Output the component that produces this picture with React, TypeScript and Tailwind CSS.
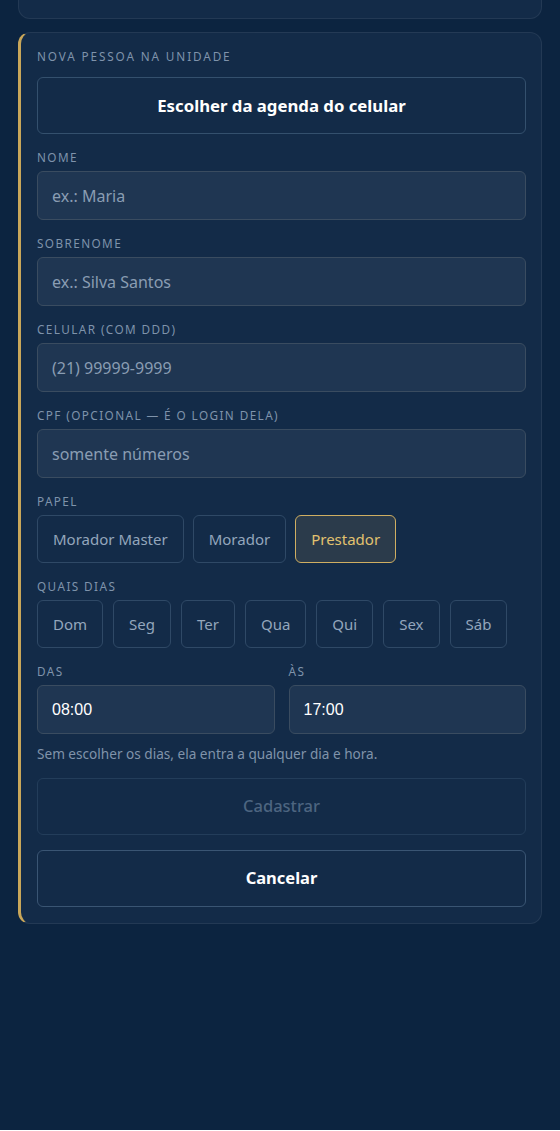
import React, { useState } from "react";

const font = { fontFamily: '"Noto Sans", "Open Sans", sans-serif' };

const DIAS = ["Dom", "Seg", "Ter", "Qua", "Qui", "Sex", "Sáb"];
const PAPEIS = ["Morador Master", "Morador", "Prestador"];

function Label({ children }: { children: React.ReactNode }) {
  return (
    <div className="text-[11.75px] leading-[14px] tracking-[0.12em] uppercase text-[#7f93ab] mb-[7px]">
      {children}
    </div>
  );
}

function Field({ label, placeholder }: { label: string; placeholder: string }) {
  return (
    <div>
      <Label>{label}</Label>
      <input
        placeholder={placeholder}
        className="w-full h-[49px] rounded-md bg-[#1f3652] border border-[#3a4c60] px-[14px] text-[16px] text-white placeholder:text-[#8a9db3] outline-none"
        style={font}
      />
    </div>
  );
}

export default function App() {
  const [papel, setPapel] = useState("Prestador");

  return (
    <main className="min-h-[1131px] bg-[#0c2440] px-[18px] pb-10" style={font}>
      {/* previous card, scrolled out */}
      <div className="h-[20px] -mt-[1px] rounded-b-xl bg-[#132b48] border border-t-0 border-white/[0.07]" />

      <div className="mt-[13px] rounded-xl bg-[#132b48] border border-white/[0.07] border-l-[3px] border-l-[#c9a75a] pl-[16px] pr-[15px] pt-[16px] pb-[16px]">
        <div className="text-[11.75px] leading-[14px] tracking-[0.16em] uppercase text-[#7f93ab]">
          Nova pessoa na unidade
        </div>

        <button className="mt-[14px] w-full h-[57px] rounded-md border border-[#34506d] text-white font-bold text-[16.75px]">
          Escolher da agenda do celular
        </button>

        <div className="mt-[16px] flex flex-col gap-[16px]">
          <Field label="Nome" placeholder="ex.: Maria" />
          <Field label="Sobrenome" placeholder="ex.: Silva Santos" />
          <Field label="Celular (com DDD)" placeholder="(21) 99999-9999" />
          <Field label="CPF (opcional — é o login dela)" placeholder="somente números" />

          <div>
            <Label>Papel</Label>
            <div className="flex gap-[9px]">
              {PAPEIS.map((p) => (
                <button
                  key={p}
                  onClick={() => setPapel(p)}
                  className={
                    papel === p
                      ? "h-[48px] px-[15px] rounded-md border border-[#cfae62] bg-[#2b3b4b] text-[#e2c26f] text-[15px]"
                      : "h-[48px] px-[15px] rounded-md border border-[#2f4966] text-[#93a6bc] text-[15px]"
                  }
                >
                  {p}
                </button>
              ))}
            </div>
          </div>

          <div>
            <Label>Quais dias</Label>
            <div className="flex gap-[10px]">
              {DIAS.map((d) => (
                <button
                  key={d}
                  className="h-[48px] px-[15px] rounded-md border border-[#2f4966] text-[#93a6bc] text-[15px]"
                >
                  {d}
                </button>
              ))}
            </div>
          </div>

          <div className="grid grid-cols-2 gap-[14px]">
            <div>
              <Label>Das</Label>
              <div
                className="h-[49px] rounded-md bg-[#1f3652] border border-[#3a4c60] px-[14px] flex items-center text-white text-[16px]"
                style={{ fontFamily: '"Liberation Sans", Arial, sans-serif' }}
              >
                08:00
              </div>
            </div>
            <div>
              <Label>Às</Label>
              <div
                className="h-[49px] rounded-md bg-[#1f3652] border border-[#3a4c60] px-[14px] flex items-center text-white text-[16px]"
                style={{ fontFamily: '"Liberation Sans", Arial, sans-serif' }}
              >
                17:00
              </div>
            </div>
          </div>
        </div>

        <p className="mt-[11px] text-[13.6px] leading-[18px] text-[#8093aa]">
          Sem escolher os dias, ela entra a qualquer dia e hora.
        </p>

        <button
          disabled
          className="mt-[15px] w-full h-[57px] rounded-md border border-[#233d5a] text-[#4d6580] font-medium text-[16.5px]"
        >
          Cadastrar
        </button>

        <button className="mt-[15px] w-full h-[57px] rounded-md border border-[#3a5573] text-white font-bold text-[16.5px]">
          Cancelar
        </button>
      </div>
    </main>
  );
}
